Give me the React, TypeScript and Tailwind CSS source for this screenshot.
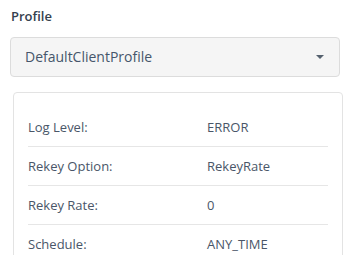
const ROWS: [string, string][] = [
  ["Log Level:", "ERROR"],
  ["Rekey Option:", "RekeyRate"],
  ["Rekey Rate:", "0"],
  ["Schedule:", "ANY_TIME"],
];

export default function App() {
  return (
    <div className="w-[350px] h-[255px] overflow-hidden bg-white font-['Open_Sans',sans-serif] text-[#4a5668]">
      <div className="pl-[11px] pt-[7px] text-[13px] font-semibold leading-[18px] text-[#34404e]">
        Profile
      </div>

      {/* Profile select */}
      <div className="ml-[10px] mt-[12px] w-[330px] h-[40px] rounded-[4px] border border-[#dcdcdc] bg-[#f5f5f5] flex items-center pl-[14px] pr-[15px]">
        <span className="flex-1 text-[14px] leading-[20px] text-[#46566b]">
          DefaultClientProfile
        </span>
        <span className="w-0 h-0 border-x-[4px] border-x-transparent border-t-[4px] border-t-[#55616e]" />
      </div>

      {/* Details card */}
      <div className="ml-[13px] mt-[15px] w-[330px] h-[200px] rounded-[4px] border border-[#e3e3e3] px-[14px] pt-[15px]">
        {ROWS.map(([label, value], i) => (
          <div
            key={label}
            className={`flex text-[13px] leading-[18px] py-[10px] ${
              i < ROWS.length - 1 ? "border-b border-[#e6e6e6]" : ""
            }`}
          >
            <span className="w-[179px]">{label}</span>
            <span>{value}</span>
          </div>
        ))}
      </div>
    </div>
  );
}
